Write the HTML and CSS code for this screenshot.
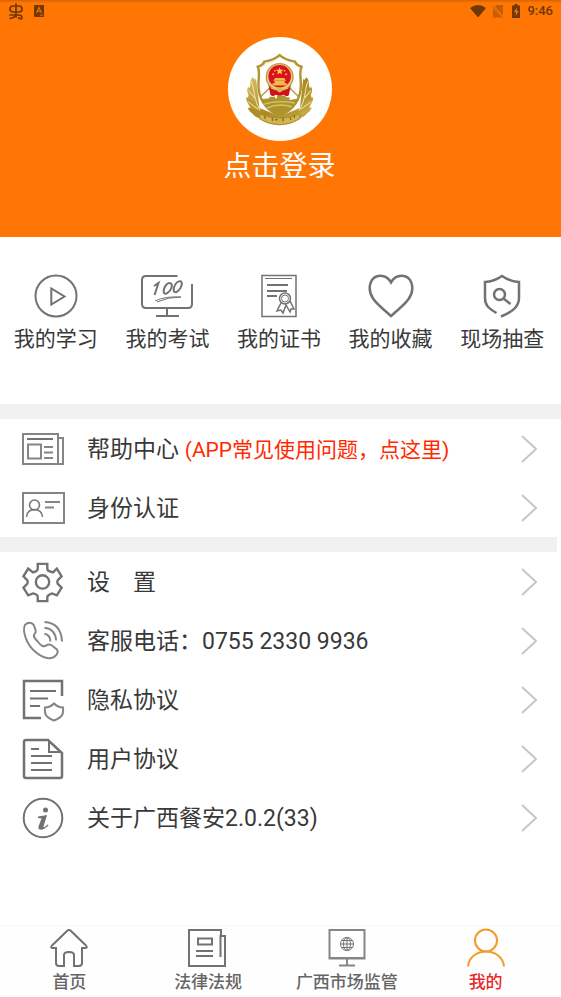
FILE: index.html
```html
<!DOCTYPE html>
<html lang="zh-CN">
<head>
<meta charset="utf-8">
<meta name="viewport" content="width=device-width, initial-scale=1">
<title>我的</title>
<link rel="stylesheet" href="styles.css">
</head>
<body>
<header class="profile">
  <div class="status">
    <div class="status-group">
      <svg width="16" height="18" viewBox="0 0 16 18" fill="none" stroke="currentColor" stroke-width="1.7" stroke-linecap="round"><path d="M8 2v13M5 4h6q3 0 3 3t-3 3H5Q2 10 2 7t3-3M2 13h8q4 0 4 2.500T10.500 16M8 12q-1 4-6 4.500"/></svg>
      <svg width="10" height="12" viewBox="0 0 10 12"><rect width="10" height="12" rx="1" fill="currentColor"/><path d="M2.500 8 5 2.500 7.500 8M3.500 6.300h3M6 10h3" fill="none" stroke="#f57200" stroke-width="1.100"/></svg>
    </div>
    <div class="status-group status-right">
      <svg width="16" height="12" viewBox="0 0 16 12"><path d="M0 3Q8-3 16 3L8 12.500z" fill="currentColor"/></svg>
      <svg class="faint" width="12" height="13" viewBox="0 0 12 13"><path d="M4 0h7v10.500L3 2zM1 3.500 9.500 12.500H1z" fill="currentColor"/><path d="M0 1 11 13" stroke="currentColor" fill="none"/></svg>
      <svg class="battery" width="8" height="14" viewBox="0 0 8 14"><path d="M2.500 0h3v1.500H8V14H0V1.500h2.500z" fill="currentColor"/><path d="M4.800 3.500 2 8h1.800v4L6.500 7H4.600z" fill="#ff7605"/></svg>
      <time>9:46</time>
    </div>
  </div>
  <a class="login" href="#login">
    <span class="avatar">
      <svg width="78" height="80" viewBox="0 0 228 234">
        <defs>
          <linearGradient id="gold" x1="0" y1="0" x2="1" y2="1"><stop offset="0" stop-color="#d9c168"/><stop offset=".5" stop-color="#a98a25"/><stop offset="1" stop-color="#cbb04a"/></linearGradient>
        </defs>
        <g fill="url(#gold)">
          <path d="M44 84c-17 13-22 26-19 42-8 14-8 27 0 38 2 18 12 31 26 34 14 13 33 20 62 22 29-2 48-9 62-22 14-3 24-16 26-34 8-11 8-24 0-38 3-16-2-29-19-42l-10 86-59 24-59-24z"/>
          <path d="M34 80c-10 12-8 24 1 34 10-10 10-24-1-34zM192 80c10 12 8 24-1 34-10-10-10-24 1-34zM20 108c-5 16 2 28 17 34 2-16-5-28-17-34zM206 108c5 16-2 28-17 34-2-16 5-28 17-34zM15 138c0 18 12 28 28 30-3-16-13-26-28-30zM211 138c0 18-12 28-28 30 3-16 13-26 28-30zM19 169c7 16 21 22 37 19-9-13-22-19-37-19zM207 169c-7 16-21 22-37 19 9-13 22-19 37-19z"/>
        </g>
        <path d="M29 91c13 18 3 47 27 86M197 91c-13 18-3 47-27 86M22 119l22 26M204 119l-22 26M20 151l30 22M206 151l-30 22" fill="none" stroke="#eee0a0" stroke-width="3"/>
        <path d="M113 15C100 27 82 32 68 34Q65 44 49 49c7 16 2 31 2 53 0 43 24 74 62 90 38-16 62-47 62-90 0-22-5-37 2-53q-16-5-19-15c-14-2-32-7-45-19z" fill="#fff" stroke="#b29431" stroke-width="7"/>
        <path d="M113 21C100 32 86 37 72 39Q69 49 56 53" fill="none" stroke="#eddf9d" stroke-width="2"/>
        <path d="M58 144l25-3v-4h17v5l5-1v-7h26v4h11v8l26-4c-7 24-28 42-55 53-27-10-47-28-55-51z" fill="#ac942f"/>
        <path d="M65 159q42-14 91-4M75 170q36-16 73-4" fill="none" stroke="#d5c365" stroke-width="4"/>
        <path d="M86 109 57 137M140 109l29 28" stroke="#b29a46" stroke-width="4"/>
        <path d="M80 102h66l-6 30q-8 6-15-1-12 5-24 0-8 7-15 0z" fill="#ce111b"/>
        <circle cx="113" cy="79" r="39" fill="#e8cf84" stroke="#c29c3e" stroke-width="4"/>
        <circle cx="113" cy="77" r="33" fill="#dc111e"/>
        <path d="m113 51 3 7h8l-6 5 2 8-7-4-7 4 2-8-6-5h8z" fill="#f9cd56"/>
        <g fill="#f1bb4a"><circle cx="94" cy="71" r="3"/><circle cx="132" cy="71" r="3"/><circle cx="99" cy="61" r="2.500"/><circle cx="127" cy="61" r="2.500"/><path d="M100 82h26l6 8H94zM98 91h30v6h6v7H92v-7h6z"/></g>
        <path d="M88 111q25 10 50 0" stroke="#e7bd55" stroke-width="4" fill="none"/>
        <circle cx="113" cy="117" r="7" fill="#e0b846"/>
        <path d="M56 187q57 25 114 0l3 14q-60 35-120 0z" fill="#d1b554" stroke="#a28325" stroke-width="2"/>
        <path d="M70 192v10M92 198v10M99 204h8M123 198v11M145 197v8M156 190v9" stroke="#8d7017" stroke-width="4"/>
      </svg>
    </span>
    <span class="login-text">点击登录</span>
  </a>
</header>

<main>
  <nav class="shortcuts" aria-label="快捷入口">
    <a href="#study">
      <svg width="44" height="44" viewBox="0 0 44 44"><circle cx="22" cy="22" r="20.500"/><path d="M17.300 14.500v16L30.500 22.500z"/></svg>
      <span>我的学习</span>
    </a>
    <a href="#exam">
      <svg width="54" height="44" viewBox="0 0 54 44"><path d="M37.500 2H6Q2 2 2 6v24q0 4 4 4h42q4 0 4-4V10M27 34v8M16 42h23"/><path d="m14 12 4.500-3-4 12M31 9.500c-3-2-6 2-7 5.500-1 5 1 6 4 3.500 3-2 5-7 3-9zM41 7.500c-3-1-6 2-7 6-1 5 1 6 4 3.500 3-2 5-8 3-9.500z"/><path class="thin" d="M15 27q10-5 26-4-13 0-24 5"/></svg>
      <span>我的考试</span>
    </a>
    <a href="#certificate">
      <svg width="38" height="44" viewBox="0 0 38 44"><path class="fine" d="M2 1.500h34v41H2z"/><path class="thin" d="M5 4.500h27"/><path d="M7 11h21M7 17h20M7 22h10"/><g class="fine"><circle cx="25" cy="24.500" r="5.500"/><circle class="thin" cx="25" cy="24.500" r="3.500"/><path d="m21 29-4 8 4-1 2 3 3-8 4 7 1-3h3l-4-8"/></g></svg>
      <span>我的证书</span>
    </a>
    <a href="#favorites">
      <svg width="48" height="44" viewBox="0 0 48 44"><path class="medium" d="M24 8.500C19-.5 7-.5 3.500 9-.5 22 10 30 24 42 38 30 48.500 22 44.500 9 41-.5 29-.5 24 8.500z"/></svg>
      <span>我的收藏</span>
    </a>
    <a href="#inspection">
      <svg width="40" height="44" viewBox="0 0 40 44"><path class="medium" d="M14.500 39C6 34 3 31 3 24V8Q12 7.500 20 2q8 5.500 17 6v16c0 9-7 14-18 18.500"/><circle class="medium" cx="17.500" cy="20.500" r="5.500"/><path class="medium" d="m21.500 24.500 7 5.500"/></svg>
      <span>现场抽查</span>
    </a>
  </nav>

  <div class="menu">
    <a href="#help">
      <svg class="icon" viewBox="0 0 42 42"><path class="soft" d="M1 6h35v30H1zM36 10h5v26h-5"/><path d="M5 11h26"/><path class="soft" d="M6 16.500h13v14H6zM22 19h9M22 24.500h9M22 30h9"/></svg>
      <span>帮助中心 <em>(APP常见使用问题，点这里)</em></span>
      <svg class="arrow" viewBox="0 0 16 28"><path d="m1 1 14 13L1 27"/></svg>
    </a>
    <a href="#identity">
      <svg class="icon" viewBox="0 0 42 42"><path class="soft" d="M1 6h41v30H1z"/><circle class="fine" cx="12.500" cy="18" r="5"/><path class="fine" d="M4.500 30c0-10 16-10 16 0"/><path class="soft" d="M23 15h15M23 20.500h9"/></svg>
      <span>身份认证</span>
      <svg class="arrow" viewBox="0 0 16 28"><path d="m1 1 14 13L1 27"/></svg>
    </a>
  </div>

  <div class="menu menu-second">
    <a href="#settings">
      <svg class="icon" viewBox="-0.500 -1 44 44"><path class="medium" d="M16 2h10v5q0 2 3 3l3 1 4-4 5 8-4 4q-1 2 0 4l4 4-5 8-5-2q-5 2-5 4v4H16v-4q0-3-5-4l-5 2-5-8 4-4q1-2 0-4l-4-4 5-8 5 4 3-1q2-1 2-3z"/><circle class="medium" cx="21" cy="21" r="7"/></svg>
      <span>设　置</span>
      <svg class="arrow" viewBox="0 0 16 28"><path d="m1 1 14 13L1 27"/></svg>
    </a>
    <a href="tel:075523309936">
      <svg class="icon" viewBox="0 0 43 43"><path class="soft" d="M3 5c3-3 7-3 9 0 2 5 3 7 1 9s-1 4 3 8c4 5 6 6 9 4s5-1 8 2c5 3 4 5 2 8-4 5-13 4-22-4C5 25 0 12 3 5zM23 14q6 1 6 8M23 8q11 1 12 13M23 2q17 1 18 20"/></svg>
      <span>客服电话：0755 2330 9936</span>
      <svg class="arrow" viewBox="0 0 16 28"><path d="m1 1 14 13L1 27"/></svg>
    </a>
    <a href="#privacy">
      <svg class="icon" viewBox="0 0 42 42"><path class="medium" d="M40 17V2H2v37h17"/><path d="M8 12h26M8 19.500h18M8 27h10"/><path class="soft" d="M32 24.500q4 4 9 4c1 8-2 10-9 13-7-3-10-5-9-13q5 0 9-4z"/></svg>
      <span>隐私协议</span>
      <svg class="arrow" viewBox="0 0 16 28"><path d="m1 1 14 13L1 27"/></svg>
    </a>
    <a href="#terms">
      <svg class="icon" viewBox="0 0 42 42"><path class="medium" d="M4 2h22l14 13v23q0 2-2 2H4q-2 0-2-2V4q0-2 2-2z"/><path d="M27 2v12h13M9 11h8M9 18h21M9 25h21M9 32h21"/></svg>
      <span>用户协议</span>
      <svg class="arrow" viewBox="0 0 16 28"><path d="m1 1 14 13L1 27"/></svg>
    </a>
    <a href="#about">
      <svg class="icon" viewBox="0 0 42 42"><circle cx="21" cy="21" r="19.300"/><circle class="solid" cx="23.500" cy="13" r="2.500"/><path class="solid" d="M16 19.500q5-1 9-1.500l-3.500 11.500c0 2 2 0 4-2l1 1c-5 5-11 6-10 1l3-8-3.500-.5z"/></svg>
      <span>关于广西餐安2.0.2(33)</span>
      <svg class="arrow" viewBox="0 0 16 28"><path d="m1 1 14 13L1 27"/></svg>
    </a>
  </div>
</main>

<nav class="tabs" aria-label="主导航">
  <a href="#home">
    <svg width="40" height="40" viewBox="0 0 40 40"><path d="M7 20H4q-3 0-1-2.500L18 3q2-2 4 0l15 14.500q2 2.500-1 2.500h-3v15q0 3-3 3h-5V27q0-3-5-3t-5 3v11h-5q-3 0-3-3z"/></svg>
    <span>首页</span>
  </a>
  <a href="#law">
    <svg width="40" height="40" viewBox="1 0 40 40"><path d="M34 8V2H2v36h36V8h-4.500v21M11 10.500h14v6H11zM9 23h17M9 28h17"/></svg>
    <span>法律法规</span>
  </a>
  <a href="#market">
    <svg width="40" height="40" viewBox="0 0 40 40"><path class="soft" d="M2.500 2h35v28h-35zM1.500 30.500h37M20 31v6M12 37.500h16"/><g class="thin"><circle cx="20" cy="16" r="6.500"/><ellipse cx="20" cy="16" rx="3.500" ry="6.500"/><path d="M20 9v14M13.500 16h13M14.500 12.500h11M14.500 19.500h11"/></g></svg>
    <span>广西市场监管</span>
  </a>
  <a class="active" href="#me" aria-current="page">
    <svg width="40" height="40" viewBox="0 0 40 40"><circle cx="20" cy="12.500" r="11"/><path d="M2 38.500c2-20 34-20 36 0"/></svg>
    <span>我的</span>
  </a>
</nav>
</body>
</html>
```
FILE: styles.css
```css
* { box-sizing: border-box; }

body {
  margin: 0;
  min-height: 100vh;
  display: flex;
  flex-direction: column;
  background: #fff;
  color: #393939;
  font-family: Roboto, "Noto Sans CJK SC", sans-serif;
}

a { color: inherit; text-decoration: none; }
svg { display: block; flex: none; }

.profile {
  height: 237px;
  background: linear-gradient(#d86300, #ff7605 3px);
  color: #fff;
}

.status {
  height: 22px;
  padding: 0 8px;
  display: flex;
  align-items: center;
  justify-content: space-between;
  color: #703804;
}
.status-group { display: flex; align-items: center; gap: 10px; }
.status-right { gap: 6px; }
.status time { font-size: 13px; font-weight: 500; line-height: 22px; }
.faint { opacity: 0.4; }
.battery { margin: 0 1px 0 2px; }

.login {
  padding: 15px 2px 0 0;
  display: flex;
  flex-direction: column;
  align-items: center;
}
.avatar {
  width: 104px;
  height: 104px;
  padding-top: 2px;
  display: grid;
  place-items: center;
  background: #fff;
  border-radius: 50%;
}
.login-text { font-size: 28px; line-height: 52px; }

.shortcuts {
  height: 167px;
  padding: 37px 3px 0 0;
  display: grid;
  grid-template-columns: repeat(5, 1fr);
}
.shortcuts a {
  display: flex;
  flex-direction: column;
  align-items: center;
  font-size: 21px;
  line-height: 42px;
  white-space: nowrap;
}

.shortcuts svg,
.icon,
.tabs svg {
  fill: none;
  stroke: #727272;
  stroke-width: 2;
}
.shortcuts .medium, .icon .medium { stroke-width: 2.5; }
.shortcuts .fine, .icon .fine { stroke-width: 1.5; }
.shortcuts .thin, .tabs .thin { stroke-width: 1; }
.icon .soft, .tabs .soft { stroke: #858585; }
.icon .solid { fill: #727272; stroke: none; }

.menu { border-top: 15px solid #f1f1f1; }
.menu a {
  height: 59px;
  display: flex;
  align-items: center;
  gap: 23px;
  padding: 0 24px 0 22px;
  font-size: 23px;
  line-height: 36px;
}
.menu-second { margin-right: 4px; }
.menu-second a { padding-right: 20px; }
.menu span { flex: 1; padding-top: 3px; white-space: nowrap; }
.menu em {
  color: #ff2a00;
  font-size: 21px;
  font-style: normal;
  line-height: 1;
}
.icon { width: 42px; height: 42px; overflow: visible; }
.arrow {
  width: 16px;
  height: 28px;
  fill: none;
  stroke: #c7c7cb;
  stroke-width: 2;
}

.tabs {
  margin-top: auto;
  height: 72px;
  padding: 2px 6px 0 0;
  display: grid;
  grid-template-columns: repeat(4, 1fr);
  border-top: 1px solid #f8f8f8;
  background: #fefefe;
  color: #666;
  font-size: 17px;
  font-weight: 500;
}
.tabs a {
  display: flex;
  flex-direction: column;
  align-items: center;
  line-height: 28px;
  white-space: nowrap;
}
.tabs .active { color: #e32b2b; }
.tabs .active svg { stroke: #f39a2b; }
```
